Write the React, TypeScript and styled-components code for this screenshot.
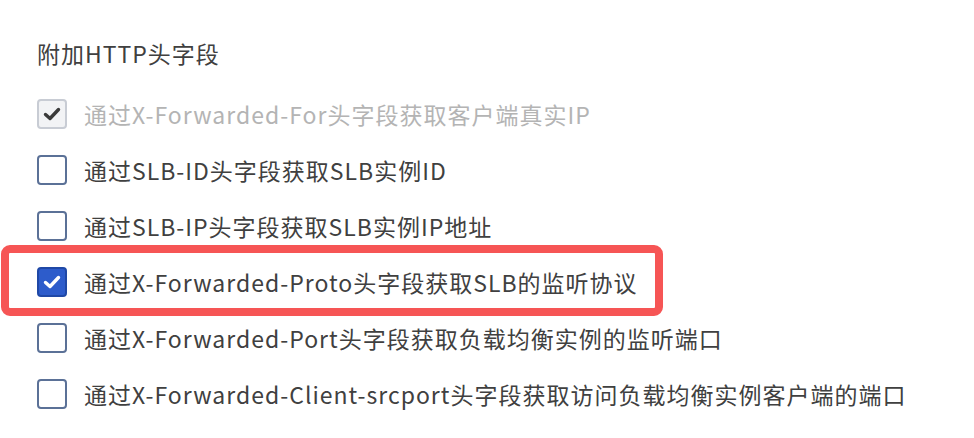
import styled, { createGlobalStyle } from "styled-components";

const GlobalStyle = createGlobalStyle`
    body {
        margin: 0;
        background: #ffffff;
        font-family: "Noto Sans CJK SC", sans-serif;
    }
`

const Panel = styled.section`
    padding: 38px 0 0 37px;
    width: 974px;
    height: 438px;
    box-sizing: border-box;
`

const Title = styled.h3`
    margin: 0 0 31px 0;
    font-size: 23px;
    font-weight: 400;
    letter-spacing: 1px;
    color: #404040;
    line-height: 30px;
`

const List = styled.div`
    display: flex;
    flex-direction: column;
    gap: 26px;
`

const Option = styled.label<{ $highlight?: boolean }>`
    display: flex;
    align-items: center;
    gap: 17px;
    height: 30px;
    font-size: 23px;
    line-height: 30px;
    letter-spacing: 1px;
    position: relative;

    ${(p) => p.$highlight && `
        &::before {
            content: "";
            position: absolute;
            left: -36px;
            top: -22px;
            width: 662px;
            height: 71px;
            box-sizing: border-box;
            border: 8px solid #f65555;
            border-radius: 9px;
        }
    `}
`

const Box = styled.span<{ $checked?: boolean; $disabled?: boolean }>`
    width: 30px;
    height: 30px;
    box-sizing: border-box;
    border-radius: 4px;
    flex-shrink: 0;
    display: flex;
    align-items: center;
    justify-content: center;
    border: 2px solid ${(p) => (p.$disabled ? "#c8ccd4" : p.$checked ? "#1f48a6" : "#5b7197")};
    background: ${(p) => (p.$disabled ? "#f2f3f5" : p.$checked ? "#2d5ccb" : "#ffffff")};
`

const Label = styled.span<{ $disabled?: boolean }>`
    color: ${(p) => (p.$disabled ? "#b4b4b4" : "#404040")};
    white-space: nowrap;
`

const Check = ({ color }: { color: string }) => (
    <svg width="22" height="22" viewBox="0 0 22 22">
        <path d="M4.5 11.5 L9 15.5 L17.5 6.5" fill="none" stroke={color} strokeWidth="3.4" strokeLinecap="round" strokeLinejoin="round" />
    </svg>
)

const options = [
    { text: "通过X-Forwarded-For头字段获取客户端真实IP", checked: true, disabled: true },
    { text: "通过SLB-ID头字段获取SLB实例ID" },
    { text: "通过SLB-IP头字段获取SLB实例IP地址" },
    { text: "通过X-Forwarded-Proto头字段获取SLB的监听协议", checked: true, highlight: true },
    { text: "通过X-Forwarded-Port头字段获取负载均衡实例的监听端口" },
    { text: "通过X-Forwarded-Client-srcport头字段获取访问负载均衡实例客户端的端口" },
]

function App() {
    return (
        <>
            <GlobalStyle />
            <Panel>
                <Title>附加HTTP头字段</Title>
                <List>
                    {options.map((o) => (
                        <Option key={o.text} $highlight={o.highlight}>
                            <Box $checked={o.checked} $disabled={o.disabled}>
                                {o.checked && <Check color={o.disabled ? "#3a3a3a" : "#ffffff"} />}
                            </Box>
                            <Label $disabled={o.disabled}>{o.text}</Label>
                        </Option>
                    ))}
                </List>
            </Panel>
        </>
    );
}

export default App;
